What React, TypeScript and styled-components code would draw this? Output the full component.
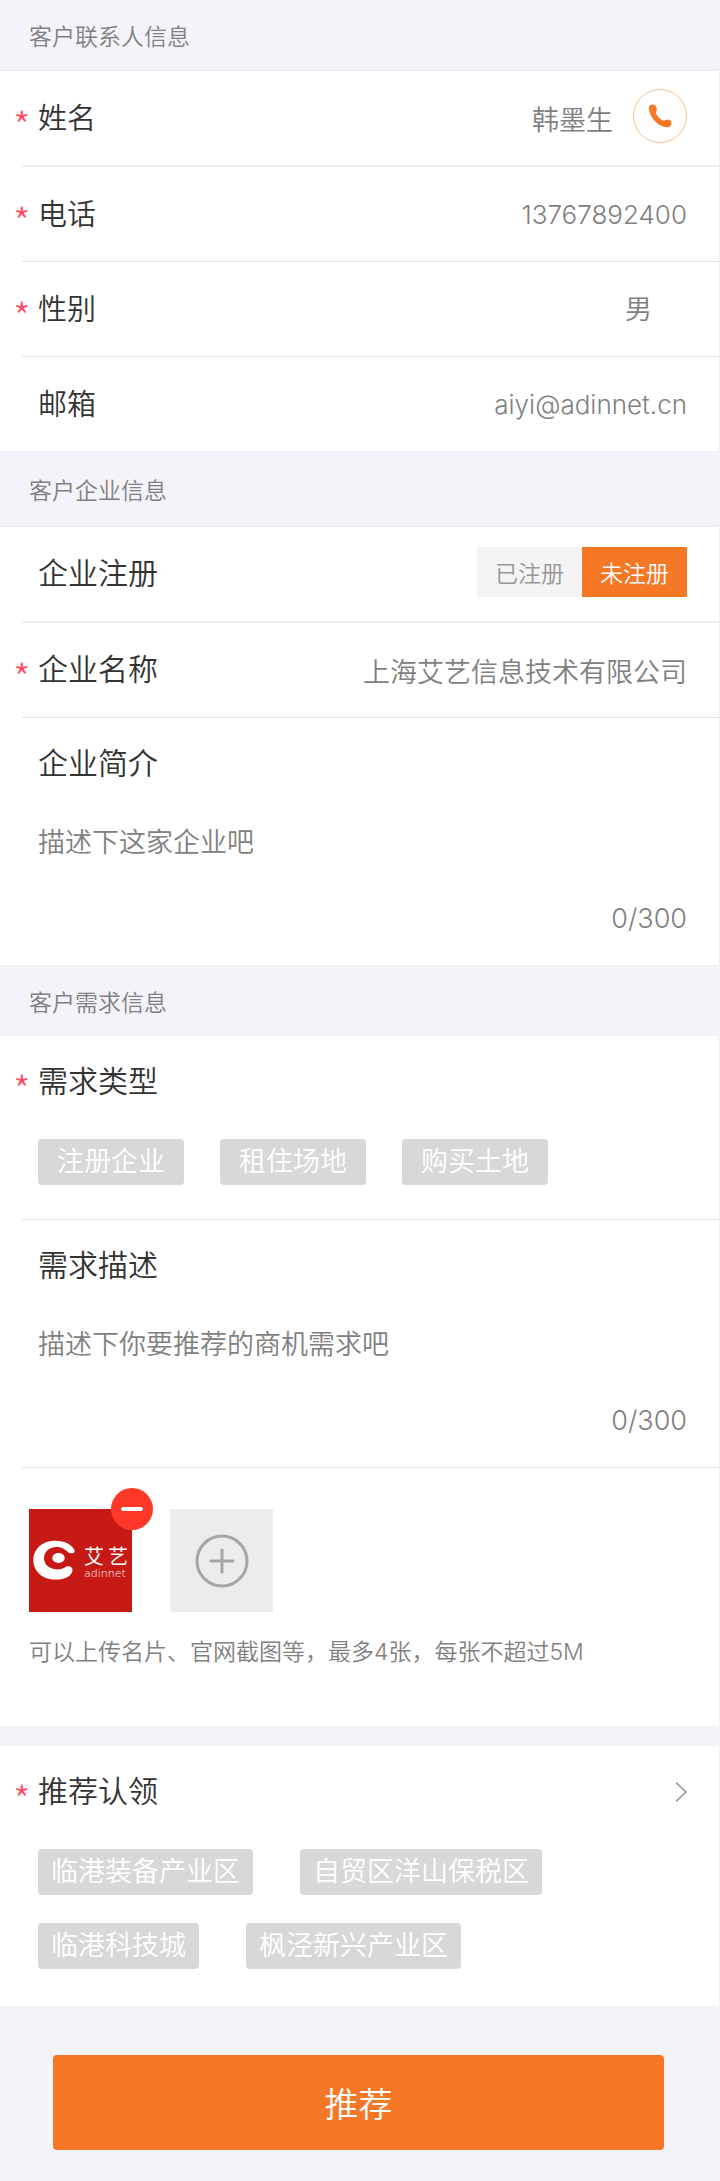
import React, { useState } from 'react';
import styled, { createGlobalStyle } from 'styled-components';

const color = {
  page: '#f4f3f9',
  panel: '#ffffff',
  line: '#e4e4e4',
  edge: '#efeff1',
  ink: '#333333',
  grey: '#808080',
  orange: '#f67726',
  star: '#ff4a60',
  tag: '#d8d8d8',
};

const GlobalStyle = createGlobalStyle`
  *, *::before, *::after { box-sizing: border-box; }
  body { margin: 0; background: ${color.page}; }
  body, button, input, textarea, select {
    font-family: Inter, 'Noto Sans CJK SC', sans-serif;
    font-weight: 350;
  }
`;

const Form = styled.form`
  display: flex;
  flex-direction: column;
  min-height: 100vh;
  background: ${color.page};
  color: ${color.ink};
`;

const SectionTitle = styled.h2<{ $tall?: boolean }>`
  display: flex;
  align-items: center;
  height: ${(p) => (p.$tall ? 73 : 69)}px;
  margin: 0;
  padding-left: 29px;
  font-size: 23px;
  font-weight: 350;
  color: ${color.grey};
`;

const Panel = styled.section<{ $top?: number }>`
  background: ${color.panel};
  border: 0 solid ${color.edge};
  border-width: ${(p) => p.$top ?? 2}px 1px 1px 0;
`;

const Gap = styled.div`
  height: 18px;
`;

const Divider = styled.hr<{ $thick?: boolean }>`
  height: ${(p) => (p.$thick ? 2 : 1)}px;
  margin: 0 0 0 22px;
  border: 0;
  background: ${(p) => (p.$thick ? '#eeeeee' : color.line)};
`;

const Row = styled.div`
  display: flex;
  align-items: center;
  height: 94px;
  padding: 0 32px 0 13px;
`;

const Head = styled(Row)`
  height: 92px;
`;

const Star = styled.span`
  flex: none;
  width: 25px;
  padding-top: 14px;
  font-family: 'Noto Sans CJK SC', sans-serif;
  font-size: 40px;
  font-weight: 300;
  line-height: 28px;
  color: ${color.star};
`;

const Label = styled.label<{ $short?: boolean }>`
  flex: none;
  padding: ${(p) => (p.$short ? '2px 0 0' : '0 0 2px')};
  font-size: ${(p) => (p.$short ? 29 : 30)}px;
  line-height: 44px;
  white-space: nowrap;
`;

const Caption = styled.span`
  flex: none;
  padding-bottom: 2px;
  font-size: 30px;
  line-height: 44px;
  white-space: nowrap;
`;

const Value = styled.input<{ $latin?: boolean }>`
  flex: 1;
  min-width: 0;
  height: 44px;
  padding: 0;
  border: 0;
  outline: 0;
  background: transparent;
  font-size: ${(p) => (p.$latin ? 26 : 27)}px;
  font-weight: ${(p) => (p.$latin ? 300 : 350)};
  text-align: right;
  color: ${color.grey};
`;

const Choice = styled.select`
  flex: 1;
  min-width: 0;
  height: 44px;
  padding: 0 35px 0 0;
  border: 0;
  outline: 0;
  appearance: none;
  background: transparent;
  font-size: 27px;
  text-align: right;
  text-align-last: right;
  color: ${color.grey};
`;

const CallLink = styled.a`
  display: grid;
  place-items: center;
  flex: none;
  width: 54px;
  height: 54px;
  margin: 0 0 4px 20px;
  border: 1px solid #fbb98f;
  border-radius: 50%;
`;

const Segments = styled.div`
  display: flex;
  margin: 0 0 4px auto;
`;

const Segment = styled.label`
  position: relative;
  display: grid;
  place-items: center;
  width: 105px;
  height: 50px;
  background: #f4f4f4;
  color: #979797;
  font-size: 23px;
  cursor: pointer;

  &:has(input:checked) {
    background: ${color.orange};
    color: #ffffff;
  }
`;

const SegmentInput = styled.input`
  position: absolute;
  inset: 0;
  margin: 0;
  opacity: 0;
  cursor: pointer;
`;

const TextBlock = styled.div`
  display: flex;
  flex-direction: column;
  padding: 14px 32px 27px 38px;
`;

const TextArea = styled.textarea`
  height: 76px;
  padding: 0;
  border: 0;
  outline: 0;
  resize: none;
  background: transparent;
  font-size: 27px;
  line-height: 38px;
  color: ${color.grey};

  &::placeholder {
    color: ${color.grey};
    opacity: 1;
  }
`;

const Counter = styled.output`
  align-self: flex-end;
  font-size: 27px;
  font-weight: 300;
  line-height: 38px;
  color: ${color.grey};
`;

const Tags = styled.div<{ $wide?: boolean }>`
  display: flex;
  flex-wrap: wrap;
  gap: 28px ${(p) => (p.$wide ? 47 : 36)}px;
  padding: ${(p) => (p.$wide ? '11px 120px 37px 38px' : '11px 38px 34px')};
`;

const Tag = styled.button<{ $roomy?: boolean }>`
  height: 46px;
  padding: 0 ${(p) => (p.$roomy ? 19 : 13)}px;
  border: 0;
  border-radius: 4px;
  background: ${color.tag};
  color: #ffffff;
  font-size: 27px;
  line-height: 44px;
  white-space: nowrap;
  cursor: pointer;
`;

const Uploads = styled.div`
  display: flex;
  gap: 38px;
  padding: 41px 29px 0;
`;

const Thumb = styled.div`
  position: relative;
  width: 103px;
  height: 103px;
  background: #c81a14;
`;

const RemoveButton = styled.button`
  position: absolute;
  top: -21px;
  right: -21px;
  display: grid;
  place-items: center;
  width: 42px;
  height: 42px;
  padding: 0;
  border: 0;
  border-radius: 50%;
  background: #fe3727;
  cursor: pointer;
`;

const AddButton = styled.button`
  display: grid;
  place-items: center;
  width: 103px;
  height: 103px;
  padding: 0;
  border: 0;
  background: #ececec;
  cursor: pointer;
`;

const Hint = styled.p`
  margin: 0;
  padding: 23px 29px 57px;
  font-size: 23px;
  line-height: 34px;
  color: ${color.grey};
`;

const MoreButton = styled.button`
  display: grid;
  place-items: center;
  margin-left: auto;
  padding: 0;
  border: 0;
  background: transparent;
  cursor: pointer;
`;

const Footer = styled.footer`
  padding: 48px 56px 31px 53px;
`;

const Submit = styled.button`
  width: 100%;
  height: 95px;
  border: 0;
  border-radius: 4px;
  background: ${color.orange};
  color: #ffffff;
  font-size: 34px;
  cursor: pointer;
`;

const PhoneIcon = () => (
  <svg width="24" height="24" viewBox="0 0 24 24" aria-hidden="true">
    <path
      fill={color.orange}
      d="M4.6.6C2.200.6.700 2.300.800 4.600c.300 4.200 2.600 9 6.200 12.600 3.600 3.500 7.600 5.900 11.800 6.100 2.600.1 4.700-1.600 4.700-3.900 0-2.300-1.700-3.900-3.900-3.900-1.500 0-2.600.8-3.900 1.300-1.700-.7-3.400-1.900-4.800-3.300C9.600 12.100 8.400 10.600 7.700 9c.4-1.200 1.100-2.200 1.100-3.900C8.800 2.500 7 .6 4.600.6z"
    />
  </svg>
);

const AdinnetLogo = () => (
  <svg width="103" height="103" viewBox="0 0 103 103" role="img" aria-label="艾艺 adinnet">
    <path
      fill="#fff"
      d="M45.800 42C43.500 35.600 36 31.700 26 31.700 13.500 31.700 4.300 40 4.300 51.200S14 70.600 26.500 70.600c10 0 17-4.200 17-9.700 0-2.500-2.200-3.900-4.600-3.600-3 .4-5 3.200-9.400 3.200-8 0-14.500-4.300-14.500-11.300 0-6.700 5.500-11.200 12.500-11.200 5.500 0 8.500 2.300 11 4.700 2.800 2.500 6.800 2 7.300-.7z"
    />
    <ellipse cx="29.500" cy="49" rx="6.200" ry="5" fill="#fff" />
    <g fill="#fff" fontFamily="'Noto Sans CJK SC', sans-serif" fontSize="20" fontWeight="400">
      <text x="55" y="55">艾</text>
      <text x="79" y="55">艺</text>
    </g>
    <text x="55" y="68" fill="#fff" fontFamily="'DejaVu Sans', sans-serif" fontSize="11">
      adinnet
    </text>
  </svg>
);

const MinusIcon = () => (
  <svg width="24" height="6" viewBox="0 0 24 6" aria-hidden="true">
    <rect x="1" y="1" width="22" height="4" rx="2" fill="#fff" />
  </svg>
);

const AddIcon = () => (
  <svg width="54" height="54" viewBox="0 0 54 54" aria-hidden="true">
    <g fill="none" stroke="#a6a6a6" strokeWidth="3" strokeLinecap="round">
      <circle cx="27" cy="27" r="25" />
      <path d="M16 27h22M27 16v22" />
    </g>
  </svg>
);

const ChevronIcon = () => (
  <svg width="12" height="22" viewBox="0 0 12 22" aria-hidden="true">
    <path d="M1 1.500l10 9.500-10 9.500" fill="none" stroke="#8f8f8f" strokeWidth="1.500" />
  </svg>
);

const needs = ['注册企业', '租住场地', '购买土地'];
const zones = ['临港装备产业区', '自贸区洋山保税区', '临港科技城', '枫泾新兴产业区'];
const limit = 300;

function LimitedText({ id, placeholder }: { id: string; placeholder: string }) {
  const [text, setText] = useState('');
  return (
    <TextBlock>
      <TextArea
        id={id}
        placeholder={placeholder}
        maxLength={limit}
        value={text}
        onChange={(e) => setText(e.target.value)}
      />
      <Counter htmlFor={id}>
        {text.length}/{limit}
      </Counter>
    </TextBlock>
  );
}

export default function App() {
  return (
    <>
      <GlobalStyle />
      <Form onSubmit={(e) => e.preventDefault()}>
        <SectionTitle>客户联系人信息</SectionTitle>
        <Panel>
          <Row>
            <Star>*</Star>
            <Label $short htmlFor="name">姓名</Label>
            <Value id="name" defaultValue="韩墨生" />
            <CallLink href="tel:13767892400" aria-label="拨打电话">
              <PhoneIcon />
            </CallLink>
          </Row>
          <Divider $thick />
          <Row>
            <Star>*</Star>
            <Label $short htmlFor="phone">电话</Label>
            <Value $latin id="phone" type="tel" defaultValue="13767892400" />
          </Row>
          <Divider />
          <Row>
            <Star>*</Star>
            <Label $short htmlFor="gender">性别</Label>
            <Choice id="gender" defaultValue="男">
              <option>男</option>
              <option>女</option>
            </Choice>
          </Row>
          <Divider />
          <Row>
            <Star />
            <Label $short htmlFor="email">邮箱</Label>
            <Value $latin id="email" type="email" defaultValue="aiyi@adinnet.cn" />
          </Row>
        </Panel>

        <SectionTitle $tall>客户企业信息</SectionTitle>
        <Panel>
          <Row>
            <Star />
            <Caption id="registered">企业注册</Caption>
            <Segments role="radiogroup" aria-labelledby="registered">
              <Segment>
                <SegmentInput type="radio" name="registered" value="yes" />
                已注册
              </Segment>
              <Segment>
                <SegmentInput type="radio" name="registered" value="no" defaultChecked />
                未注册
              </Segment>
            </Segments>
          </Row>
          <Divider $thick />
          <Row>
            <Star>*</Star>
            <Label htmlFor="company">企业名称</Label>
            <Value id="company" defaultValue="上海艾艺信息技术有限公司" />
          </Row>
          <Divider />
          <Head>
            <Star />
            <Label htmlFor="intro">企业简介</Label>
          </Head>
          <LimitedText id="intro" placeholder="描述下这家企业吧" />
        </Panel>

        <SectionTitle>客户需求信息</SectionTitle>
        <Panel $top={1}>
          <Head>
            <Star>*</Star>
            <Caption id="needs">需求类型</Caption>
          </Head>
          <Tags role="group" aria-labelledby="needs">
            {needs.map((need) => (
              <Tag key={need} type="button" $roomy>
                {need}
              </Tag>
            ))}
          </Tags>
          <Divider />
          <Head>
            <Star />
            <Label htmlFor="detail">需求描述</Label>
          </Head>
          <LimitedText id="detail" placeholder="描述下你要推荐的商机需求吧" />
          <Divider />
          <Uploads>
            <Thumb>
              <AdinnetLogo />
              <RemoveButton type="button" aria-label="删除图片">
                <MinusIcon />
              </RemoveButton>
            </Thumb>
            <AddButton type="button" aria-label="添加图片">
              <AddIcon />
            </AddButton>
          </Uploads>
          <Hint>可以上传名片、官网截图等，最多4张，每张不超过5M</Hint>
        </Panel>

        <Gap />
        <Panel $top={1}>
          <Head>
            <Star>*</Star>
            <Caption id="zones">推荐认领</Caption>
            <MoreButton type="button" aria-label="选择推荐认领">
              <ChevronIcon />
            </MoreButton>
          </Head>
          <Tags $wide role="group" aria-labelledby="zones">
            {zones.map((zone) => (
              <Tag key={zone} type="button">
                {zone}
              </Tag>
            ))}
          </Tags>
        </Panel>

        <Footer>
          <Submit type="submit">推荐</Submit>
        </Footer>
      </Form>
    </>
  );
}
